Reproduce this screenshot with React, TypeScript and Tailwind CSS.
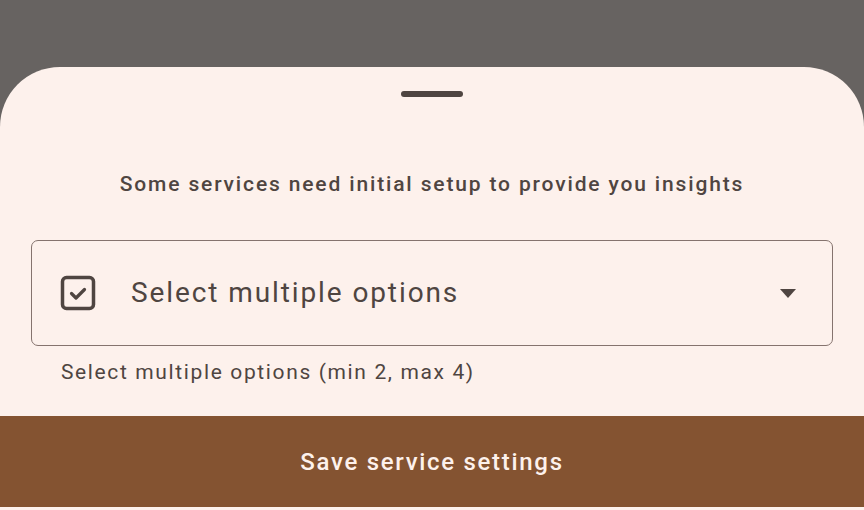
export default function App() {
  return (
    <div
      className="flex h-[510px] w-[864px] flex-col overflow-hidden bg-[#676361]"
      style={{ fontFamily: 'Roboto, "Noto Sans", sans-serif' }}
    >
      <div className="h-[67px] shrink-0" />
      <div className="flex flex-1 flex-col rounded-t-[60px] bg-[#fdf1ec]">
        {/* drag handle */}
        <div className="flex justify-center pt-[24px]">
          <div className="h-[6px] w-[62px] rounded-full bg-[#4f4541]" />
        </div>

        <p className="mt-[73px] text-center text-[21px] font-medium leading-[28px] tracking-[1.85px] text-[#4f4541]">
          Some services need initial setup to provide you insights
        </p>

        <div className="mx-[31px] mt-[42px] flex h-[106px] items-center rounded-[7px] border border-[#85736e] pl-[28px] pr-[36px]">
          <svg width="36" height="36" viewBox="0 0 36 36" fill="none">
            <rect x="2.5" y="2.5" width="31" height="31" rx="4" stroke="#4f4541" strokeWidth="3.5" />
            <path d="M11.5 18.5l4.5 4.5 8.5-8.5" stroke="#4f4541" strokeWidth="3.2" strokeLinecap="round" strokeLinejoin="round" />
          </svg>
          <span className="ml-[35px] flex-1 text-[28px] leading-[36px] tracking-[1.9px] text-[#4f4541]">
            Select multiple options
          </span>
          <svg width="16" height="9" viewBox="0 0 16 9">
            <path d="M0 0h16l-8 9z" fill="#4f4541" />
          </svg>
        </div>

        <p className="ml-[61px] mt-[12px] text-[21px] leading-[28px] tracking-[1.63px] text-[#4f4541]">
          Select multiple options (min 2, max 4)
        </p>

        <button className="mt-[30px] flex h-[91px] w-full shrink-0 items-center justify-center bg-[#845331] text-[24px] font-medium tracking-[1.7px] text-[#fdf1ec]">
          Save service settings
        </button>
      </div>
    </div>
  );
}
